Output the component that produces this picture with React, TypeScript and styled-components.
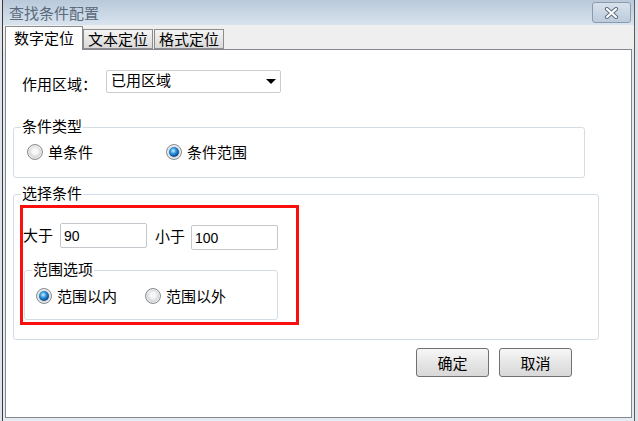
import styled, { createGlobalStyle } from "styled-components";

const GlobalStyle = createGlobalStyle`
  html, body {
    margin: 0;
    padding: 0;
  }
  body {
    font-family: "Noto Sans CJK SC", "Liberation Sans", sans-serif;
    font-size: 15px;
    color: #000;
  }
  * {
    box-sizing: border-box;
  }
`;

const Desktop = styled.div`
  display: flex;
  width: 638px;
  height: 421px;
  overflow: hidden;
  padding-left: 2px;
  background: #dfe4ea;
`;

const Window = styled.div`
  display: flex;
  flex-direction: column;
  width: 633px;
  height: 100%;
  border-left: 1px solid #3a3a3a;
  border-right: 1px solid #5a5a5a;
  background: #e4ebf3;
`;

const TitleBar = styled.div`
  display: flex;
  align-items: center;
  justify-content: space-between;
  height: 25px;
  padding: 0 3px 0 6px;
  background: linear-gradient(#b9c9da, #d8e3ee);
`;

const Title = styled.span`
  color: #5a6a7c;
  font-size: 15px;
  line-height: 18px;
`;

const CloseButton = styled.div`
  display: flex;
  align-items: center;
  justify-content: center;
  width: 39px;
  height: 21px;
  border: 1px solid #8a9bb0;
  border-radius: 3px;
  background: linear-gradient(#d7e1ec, #bccbdb);
`;

const TabStrip = styled.div`
  display: flex;
  align-items: flex-end;
  height: 24px;
  padding-left: 2px;
  background: #efefef;
`;

const Tab = styled.div<{ $active?: boolean; $gap?: number }>`
  position: relative;
  z-index: 1;
  margin-left: ${(p) => p.$gap ?? 0}px;
  height: ${(p) => (p.$active ? 24 : 20)}px;
  margin-bottom: ${(p) => (p.$active ? -1 : 0)}px;
  padding: ${(p) => (p.$active ? "2px 8px 0" : "0 4px")};
  border: 1px solid #8c8c8c;
  border-bottom: ${(p) => (p.$active ? "none" : "1px solid #8c8c8c")};
  background: ${(p) => (p.$active ? "#fff" : "linear-gradient(#f4f4f4, #d9d9d9)")};
  font-size: 15px;
  line-height: 18px;
  white-space: nowrap;
`;

const PanelWrap = styled.div`
  padding: 0 2px;
`;

const Panel = styled.div`
  height: 369px;
  padding-top: 20px;
  border: 1px solid #828790;
  background: #fff;
`;

const AreaRow = styled.div`
  display: flex;
  align-items: flex-start;
  margin-left: 16px;
  height: 23px;
`;

const FieldLabel = styled.span<{ $width: number; $lh?: number; $indent?: number }>`
  flex: none;
  width: ${(p) => p.$width}px;
  line-height: ${(p) => p.$lh ?? 20}px;
  padding-top: ${(p) => (p.$lh ? 0 : 4)}px;
  padding-left: ${(p) => p.$indent ?? 0}px;
  white-space: nowrap;
`;

const Select = styled.div`
  display: flex;
  align-items: flex-start;
  justify-content: space-between;
  width: 175px;
  height: 23px;
  padding: 0 4px 0 4px;
  border: 1px solid #c9cdd2;
  border-radius: 2px;
  line-height: 18px;
`;

const Arrow = styled.svg`
  margin-top: 8px;
`;

const GroupBox = styled.div<{ $top: number; $left: number; $width: number; $height: number }>`
  position: relative;
  margin-top: ${(p) => p.$top}px;
  margin-left: ${(p) => p.$left}px;
  width: ${(p) => p.$width}px;
  height: ${(p) => p.$height}px;
  border: 1px solid #d3dde6;
  border-radius: 3px;
`;

const Legend = styled.span`
  position: absolute;
  top: -10px;
  left: 7px;
  padding: 0 1px;
  background: #fff;
  line-height: 16px;
  white-space: nowrap;
`;

const RadioRow = styled.div<{ $top: number; $left: number }>`
  display: flex;
  padding: ${(p) => p.$top}px 0 0 ${(p) => p.$left}px;
`;

const Option = styled.label<{ $width?: number }>`
  display: flex;
  align-items: center;
  gap: 5px;
  width: ${(p) => (p.$width ? `${p.$width}px` : "auto")};
  line-height: 16px;
  white-space: nowrap;
`;

const Radio = styled.span<{ $checked?: boolean }>`
  position: relative;
  flex: none;
  width: 16px;
  height: 16px;
  border: 1px solid #8a8d91;
  border-radius: 50%;
  background: radial-gradient(circle at 50% 45%, #f8f8f8 25%, #c2c3c5 75%, #a9abae 100%);
  box-shadow: inset 0 0 0 1px #eef0f2;

  &::after {
    content: "";
    display: ${(p) => (p.$checked ? "block" : "none")};
    position: absolute;
    left: 2px;
    top: 2px;
    width: 10px;
    height: 10px;
    border-radius: 50%;
    background: radial-gradient(circle at 42% 38%, #d6f3ff 0%, #3ea2e6 30%, #0f5aa3 60%, #0a2f5e 100%);
  }
`;

const CompareRow = styled.div`
  display: flex;
  align-items: flex-start;
  padding: 28px 0 0 9px;
`;

const NumberInput = styled.input<{ $shift?: number }>`
  width: 87px;
  height: 25px;
  margin: ${(p) => p.$shift ?? 0}px 0 0 0;
  padding: 0 0 0 3px;
  border: 1px solid #c4c8cc;
  border-radius: 2px;
  font-family: "Liberation Sans", sans-serif;
  font-size: 14px;
  color: #000;
  outline: none;
`;

const Highlight = styled.div`
  position: absolute;
  left: 6px;
  top: 10px;
  width: 279px;
  height: 120px;
  border: 3px solid #fa0f0f;
  pointer-events: none;
`;

const ButtonRow = styled.div`
  display: flex;
  justify-content: flex-end;
  gap: 10px;
  margin-top: 8px;
  padding-right: 59px;
`;

const Button = styled.div`
  display: flex;
  align-items: center;
  justify-content: center;
  width: 73px;
  height: 29px;
  border: 1px solid #707070;
  border-radius: 3px;
  background: linear-gradient(#f7f7f7, #e6e6e6 50%, #d8d8d8);
  line-height: 18px;
`;

export default function App() {
  return (
    <>
      <GlobalStyle />
      <Desktop>
        <Window>
          <TitleBar>
            <Title>查找条件配置</Title>
            <CloseButton>
              <svg width="15" height="12" viewBox="0 0 15 12">
                <path d="M3 2 L12 10 M12 2 L3 10" stroke="#5f6e80" strokeWidth="4.2" strokeLinecap="round" />
                <path d="M3 2 L12 10 M12 2 L3 10" stroke="#fff" strokeWidth="2.2" strokeLinecap="round" />
              </svg>
            </CloseButton>
          </TitleBar>
          <TabStrip>
            <Tab $active>数字定位</Tab>
            <Tab>文本定位</Tab>
            <Tab $gap={1}>格式定位</Tab>
          </TabStrip>
          <PanelWrap>
            <Panel>
              <AreaRow>
                <FieldLabel $width={84}>作用区域：</FieldLabel>
                <Select>
                  <span>已用区域</span>
                  <Arrow width="10" height="5" viewBox="0 0 10 5">
                    <polygon points="0,0 10,0 5,5" fill="#000" />
                  </Arrow>
                </Select>
              </AreaRow>

              <GroupBox $top={34} $left={7} $width={572} $height={51}>
                <Legend>条件类型</Legend>
                <RadioRow $top={16} $left={13}>
                  <Option $width={139}>
                    <Radio />
                    单条件
                  </Option>
                  <Option>
                    <Radio $checked />
                    条件范围
                  </Option>
                </RadioRow>
              </GroupBox>

              <GroupBox $top={16} $left={7} $width={586} $height={146}>
                <Legend>选择条件</Legend>
                <CompareRow>
                  <FieldLabel $width={37} $lh={24}>大于</FieldLabel>
                  <NumberInput defaultValue="90" />
                  <FieldLabel $width={44} $lh={26} $indent={8}>小于</FieldLabel>
                  <NumberInput defaultValue="100" $shift={2} />
                </CompareRow>
                <GroupBox $top={20} $left={10} $width={254} $height={50}>
                  <Legend>范围选项</Legend>
                  <RadioRow $top={17} $left={11}>
                    <Option $width={109}>
                      <Radio $checked />
                      范围以内
                    </Option>
                    <Option>
                      <Radio />
                      范围以外
                    </Option>
                  </RadioRow>
                </GroupBox>
                <Highlight />
              </GroupBox>

              <ButtonRow>
                <Button>确定</Button>
                <Button>取消</Button>
              </ButtonRow>
            </Panel>
          </PanelWrap>
        </Window>
      </Desktop>
    </>
  );
}
